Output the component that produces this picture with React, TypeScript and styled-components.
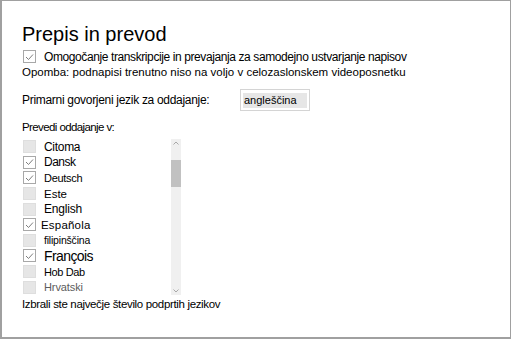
import React from 'react';
import styled, { createGlobalStyle } from 'styled-components';

const GlobalStyle = createGlobalStyle`
  html, body {
    margin: 0;
    padding: 0;
    background: #ffffff;
  }
  body {
    font-family: "Liberation Sans", Arial, sans-serif;
    color: #000;
  }
`;

const Frame = styled.div`
  box-sizing: border-box;
  width: 511px;
  height: 339px;
  border: 1px solid #a0a0a0;
  border-left-width: 2px;
  border-bottom-width: 2px;
  padding: 21px 0 0 20px;
  overflow: hidden;
`;

const Title = styled.h1`
  margin: 0;
  font-size: 20px;
  line-height: 24px;
  font-weight: 400;
`;

const Row = styled.div<{ $top?: number; $height?: number }>`
  display: flex;
  align-items: center;
  margin-top: ${(p) => p.$top ?? 0}px;
  height: ${(p) => p.$height ?? 15}px;
  font-size: 12px;
`;

const Text = styled.span<{ $size?: number; $shift?: number; $muted?: boolean; $spacing?: number }>`
  font-size: ${(p) => p.$size ?? 12}px;
  margin-left: ${(p) => p.$shift ?? 0}px;
  letter-spacing: ${(p) => p.$spacing ?? 0}px;
  color: ${(p) => (p.$muted ? '#5c5c5c' : '#000')};
  white-space: nowrap;
`;

const Label = styled.span`
  width: 218px;
  font-size: 12px;
  letter-spacing: -0.3px;
  white-space: nowrap;
`;

const Box = styled.span<{ $checked?: boolean }>`
  box-sizing: border-box;
  display: inline-flex;
  align-items: center;
  justify-content: center;
  width: 13px;
  height: 13px;
  margin-left: 1px;
  margin-right: 8px;
  flex: none;
  border: 1px solid ${(p) => (p.$checked ? '#a8a8a8' : '#dedede')};
  background: ${(p) => (p.$checked ? '#ffffff' : '#e6e6e6')};
`;

const Select = styled.div`
  box-sizing: border-box;
  width: 70px;
  height: 22px;
  border: 1px solid #d4d4d4;
  padding: 3px 2px 2px 2px;
`;

const SelectField = styled.div`
  height: 15px;
  background: #e6e6e6;
  font-size: 11px;
  line-height: 15px;
  padding-left: 1px;
`;

const List = styled.div`
  display: flex;
  width: 160px;
  height: 156px;
  margin-top: 5px;
`;

const Items = styled.div`
  width: 149px;
  display: flex;
  flex-direction: column;
`;

const Item = styled.div`
  display: flex;
  align-items: center;
  height: 15.6px;
`;

const Scrollbar = styled.div`
  position: relative;
  width: 10px;
  background: #f0f0f0;
  display: flex;
  flex-direction: column;
  align-items: center;
  justify-content: space-between;
  padding: 2px 0;
  box-sizing: border-box;
`;

const Thumb = styled.div`
  position: absolute;
  left: 0;
  top: 21px;
  width: 10px;
  height: 27px;
  background: #c1c1c1;
`;

const Footer = styled.div`
  margin-top: 2px;
  height: 14px;
  line-height: 14px;
  font-size: 11.5px;
  letter-spacing: -0.34px;
`;

const Check = () => (
  <svg width="9" height="8" viewBox="0 0 9 8">
    <path d="M1 4 L3.5 6.5 L8 1.5" fill="none" stroke="#7e7e7e" strokeWidth="1" />
  </svg>
);

const Chevron = ({ down }: { down?: boolean }) => (
  <svg width="6" height="4" viewBox="0 0 6 4">
    <path
      d={down ? 'M0.5 0.5 L3 3 L5.5 0.5' : 'M0.5 3.5 L3 1 L5.5 3.5'}
      fill="none"
      stroke="#a8a8a8"
      strokeWidth="1"
    />
  </svg>
);

type Lang = {
  name: string;
  checked: boolean;
  size: number;
  shift?: number;
  spacing?: number;
  muted?: boolean;
};

const languages: Lang[] = [
  { name: 'Citoma', checked: false, size: 12, spacing: -0.3 },
  { name: 'Dansk', checked: true, size: 12, spacing: -0.5 },
  { name: 'Deutsch', checked: true, size: 11, spacing: -0.3 },
  { name: 'Este', checked: false, size: 11.5 },
  { name: 'English', checked: false, size: 12, spacing: -0.2 },
  { name: 'Española', checked: true, size: 11.5, shift: -3, spacing: 0.2 },
  { name: 'filipinščina', checked: false, size: 10.5, spacing: -0.2 },
  { name: 'François', checked: true, size: 14, spacing: -0.6 },
  { name: 'Hob Dab', checked: false, size: 11, spacing: -0.4 },
  { name: 'Hrvatski', checked: false, size: 11, spacing: -0.1, muted: true },
];

export default function App() {
  return (
    <>
      <GlobalStyle />
      <Frame>
        <Title>Prepis in prevod</Title>
        <Row $top={3}>
          <Box $checked>
            <Check />
          </Box>
          <Text $spacing={-0.4}>
            Omogočanje transkripcije in prevajanja za samodejno ustvarjanje napisov
          </Text>
        </Row>
        <Row>
          <Text $size={11.5}>
            Opomba: podnapisi trenutno niso na voljo v celozaslonskem videoposnetku
          </Text>
        </Row>
        <Row $top={10} $height={22}>
          <Label>Primarni govorjeni jezik za oddajanje:</Label>
          <Select>
            <SelectField>angleščina</SelectField>
          </Select>
        </Row>
        <Row $top={9} $height={14}>
          <Text $size={11.5} $spacing={-0.6}>
            Prevedi oddajanje v:
          </Text>
        </Row>
        <List>
          <Items>
            {languages.map((l) => (
              <Item key={l.name}>
                <Box $checked={l.checked}>{l.checked && <Check />}</Box>
                <Text $size={l.size} $shift={l.shift} $spacing={l.spacing} $muted={l.muted}>
                  {l.name}
                </Text>
              </Item>
            ))}
          </Items>
          <Scrollbar>
            <Chevron />
            <Thumb />
            <Chevron down />
          </Scrollbar>
        </List>
        <Footer>Izbrali ste največje število podprtih jezikov</Footer>
      </Frame>
    </>
  );
}
